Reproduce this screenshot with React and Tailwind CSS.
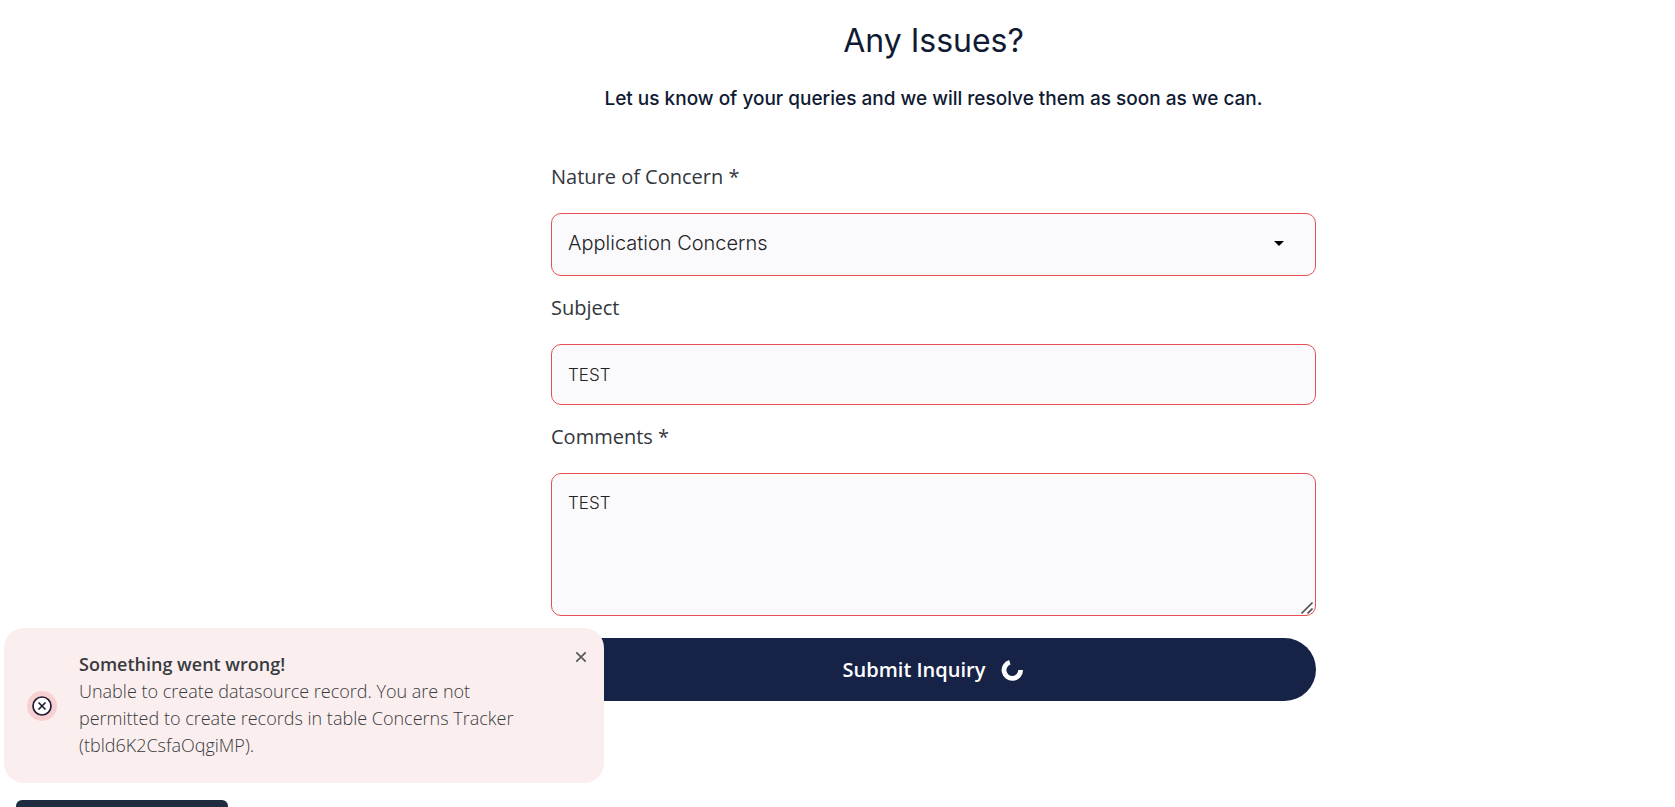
import React, { useState } from 'react';

const concerns = ['Application Concerns', 'Payment Concerns', 'Other Concerns'];

const labelClass = "text-xl leading-7 text-[#33373d] font-['Open_Sans',sans-serif]";
const fieldClass =
  'block w-full rounded-[10px] border border-[#e65054] bg-[#fafafc] px-4 leading-7 text-[#232326] outline-none font-[Inter,sans-serif]';

function Spinner() {
  return (
    <svg className="h-6 w-6" viewBox="0 0 24 24" fill="none" aria-hidden="true">
      <path d="M9.8 4.2A8.3 8.3 0 1 0 20.6 12" stroke="#fff" strokeWidth="4.8" />
    </svg>
  );
}

function Toast({ title, message, onClose }) {
  return (
    <div
      role="alert"
      className="fixed bottom-6 left-1 flex w-[600px] items-center rounded-[20px] bg-[#fbeeee] py-[22px] pl-[23px] font-['Open_Sans',sans-serif] text-[#383b3f]"
    >
      <span className="flex h-[30px] w-[30px] shrink-0 items-center justify-center rounded-full bg-[#f7d0d1]">
        <svg className="h-5 w-5" viewBox="0 0 20 20" aria-hidden="true">
          <circle cx="10" cy="10" r="9" fill="#fff" stroke="#231a35" strokeWidth="1.7" />
          <path d="M6.5 6.5l7 7M13.5 6.5l-7 7" stroke="#231a35" strokeWidth="1.7" />
        </svg>
      </span>
      <div className="ml-[22px] w-[445px] pb-[2px] text-lg">
        <p className="leading-7 font-semibold">{title}</p>
        <p className="leading-[27px] font-light">{message}</p>
      </div>
      <button
        type="button"
        onClick={onClose}
        aria-label="Close"
        className="absolute right-[15px] top-[21px] flex h-4 w-4 items-center justify-center"
      >
        <svg className="h-3 w-3" viewBox="0 0 12 12" aria-hidden="true">
          <path d="M1.3 1.3l9.4 9.4M10.7 1.3l-9.4 9.4" stroke="#55595c" strokeWidth="1.7" />
        </svg>
      </button>
    </div>
  );
}

export default function App() {
  const [concern, setConcern] = useState(concerns[0]);
  const [subject, setSubject] = useState('TEST');
  const [comments, setComments] = useState('TEST');
  const [showToast, setShowToast] = useState(true);

  return (
    <div className="min-h-screen bg-white pl-48">
      <main className="mx-auto max-w-[765px] pt-[21px]">
        {/* Heading */}
        <header className="text-center text-[#101a33] font-[Inter,sans-serif]">
          <h1 className="text-[32px] leading-10">Any Issues?</h1>
          <p className="mt-6 text-[19px] leading-7 font-medium">
            Let us know of your queries and we will resolve them as soon as we can.
          </p>
        </header>

        {/* Inquiry form */}
        <form className="mt-[50px]" onSubmit={(e) => e.preventDefault()}>
          <label htmlFor="concern" className={`block ${labelClass}`}>Nature of Concern *</label>
          <div className="relative mt-[22px]">
            <select
              id="concern"
              value={concern}
              onChange={(e) => setConcern(e.target.value)}
              className={`appearance-none h-[63px] pb-1 text-xl font-light ${fieldClass}`}
            >
              {concerns.map((c) => (
                <option key={c} value={c}>{c}</option>
              ))}
            </select>
            <svg
              className="pointer-events-none absolute right-8 top-7 h-[5px] w-[10px]"
              viewBox="0 0 10 5"
              aria-hidden="true"
            >
              <path d="M0 0h10L5 5z" fill="#000" />
            </svg>
          </div>

          <label htmlFor="subject" className={`mt-[18px] block ${labelClass}`}>Subject</label>
          <input
            id="subject"
            type="text"
            value={subject}
            onChange={(e) => setSubject(e.target.value)}
            className={`mt-[22px] h-[61px] text-[17px] font-light ${fieldClass}`}
          />

          <label htmlFor="comments" className={`mt-[18px] block ${labelClass}`}>Comments *</label>
          <div className="relative mt-[22px]">
            <textarea
              id="comments"
              value={comments}
              onChange={(e) => setComments(e.target.value)}
              className={`h-[143px] resize-none pt-[15px] text-[17px] font-light ${fieldClass}`}
            />
            {/* Resize grip */}
            <svg
              className="pointer-events-none absolute bottom-0 right-0 h-4 w-4"
              viewBox="0 0 16 16"
              aria-hidden="true"
            >
              <path d="M1.5 13.5l11-11M7.5 13.5l5-5" stroke="#505050" strokeWidth="1.7" />
            </svg>
          </div>

          <button
            type="submit"
            className="mt-[22px] flex h-[63px] w-full items-center justify-center gap-[15px] rounded-full bg-[#162347] text-xl font-semibold text-white font-['Open_Sans',sans-serif]"
          >
            Submit Inquiry
            <Spinner />
          </button>
        </form>
      </main>

      {showToast && (
        <Toast
          title="Something went wrong!"
          message="Unable to create datasource record. You are not permitted to create records in table Concerns Tracker (tbld6K2CsfaOqgiMP)."
          onClose={() => setShowToast(false)}
        />
      )}

      {/* Bottom tab, mostly below the fold */}
      <div className="fixed bottom-0 left-4 h-[7px] w-[212px] rounded-t-md bg-[#1f2b3f] shadow-md" />
    </div>
  );
}
